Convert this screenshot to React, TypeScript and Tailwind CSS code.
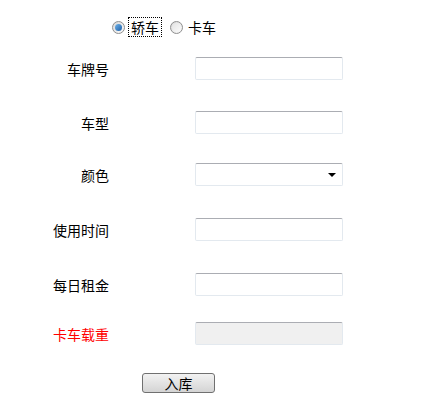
const font = { fontFamily: '"Noto Sans CJK SC", "Liberation Sans", sans-serif' };

function Radio({ checked }: { checked?: boolean }) {
  return (
    <span className="flex h-[13px] w-[13px] items-center justify-center rounded-full border border-[#8f8f8f] bg-gradient-to-br from-[#d9d9d9] to-[#fafafa]">
      {checked ? (
        <span className="h-[7px] w-[7px] rounded-full bg-gradient-to-br from-[#6fb2e8] to-[#1a5fa8]" />
      ) : (
        <span className="h-[9px] w-[9px] rounded-full bg-gradient-to-br from-[#e4e4e4] to-[#fbfbfb]" />
      )}
    </span>
  );
}

function Field({ children }: { children?: React.ReactNode }) {
  return (
    <div className="ml-[86px] h-[23px] w-[148px] rounded-[2px] border border-[#e3e9ef] border-t-[#abadb3] bg-white">
      {children}
    </div>
  );
}

function Row({ label, red, mt, children }: { label: string; red?: boolean; mt: string; children: React.ReactNode }) {
  return (
    <div className={`flex items-center ${mt}`}>
      <div className={`w-[109px] text-right text-[14px] leading-none ${red ? 'text-[#ff0000]' : 'text-black'}`}>
        {label}
      </div>
      {children}
    </div>
  );
}

export default function App() {
  return (
    <div className="h-[413px] w-[430px] bg-white" style={font}>
      <div className="pt-[17px]">
        <div className="flex h-[20px] items-center pl-[112px] text-[14px] text-black">
          <Radio checked />
          <span className="ml-[3px] border border-dotted border-black px-[2px] leading-[18px]">轿车</span>
          <span className="ml-[8px]"><Radio /></span>
          <span className="ml-[5px] leading-[18px]">卡车</span>
        </div>
      </div>

      <Row label="车牌号" mt="mt-[20px]">
        <Field />
      </Row>
      <Row label="车型" mt="mt-[31px]">
        <Field />
      </Row>
      <Row label="颜色" mt="mt-[29px]">
        <Field>
          <div className="flex h-full items-center justify-end pr-[6px]">
            <span className="h-0 w-0 border-x-[4px] border-t-[4px] border-x-transparent border-t-black" />
          </div>
        </Field>
      </Row>
      <Row label="使用时间" mt="mt-[32px]">
        <Field />
      </Row>
      <Row label="每日租金" mt="mt-[32px]">
        <Field />
      </Row>
      <Row label="卡车载重" red mt="mt-[26px]">
        <div className="ml-[86px] h-[23px] w-[148px] rounded-[2px] border border-[#e3e9ef] border-t-[#abadb3] bg-[#f0f0f0]" />
      </Row>

      <div className="mt-[28px] pl-[142px]">
        <button className="flex h-[20px] w-[73px] items-center justify-center rounded-[3px] border border-[#707070] bg-gradient-to-b from-[#f2f2f2] to-[#d4d4d4] text-[14px] leading-none text-black">
          入库
        </button>
      </div>
    </div>
  );
}
